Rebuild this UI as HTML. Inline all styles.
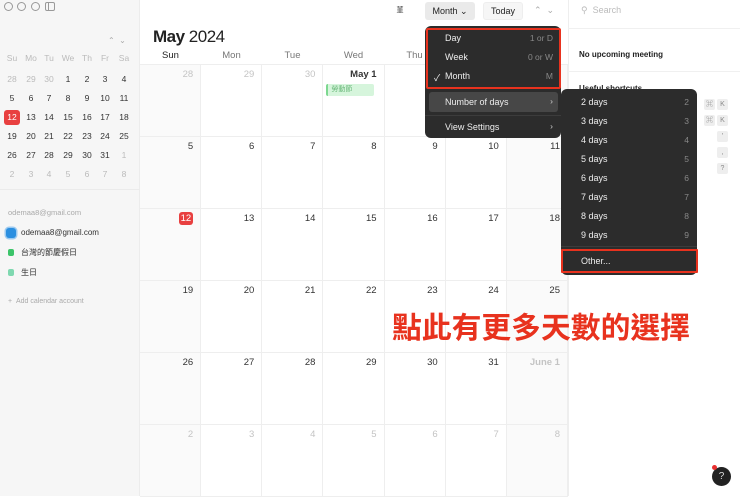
<!DOCTYPE html>
<html><head><meta charset="utf-8">
<style>
*{margin:0;padding:0;box-sizing:border-box}
body{width:740px;height:496px;overflow:hidden;background:#fff;font-family:"Liberation Sans","Noto Sans CJK TC",sans-serif;position:relative;color:#222}
.a{position:absolute}
#side{left:0;top:0;width:140px;height:496px;background:#f6f6f6;border-right:1px solid #ececec}
.mc{position:absolute;width:18px;text-align:center;font-size:8.5px;color:#333}
.g{color:#bbb}
#grid{left:140px;top:65px;width:428px;height:432px;display:grid;grid-template-columns:repeat(7,1fr);grid-template-rows:repeat(6,72px)}
#grid div{border-right:1px solid #eee;border-bottom:1px solid #eee;text-align:right;padding:4px 7px 0 0;font-size:9.5px;color:#333;position:relative}
#grid div.s{background:#fafafa}
#grid div.gr{color:#c4c4c4}
.dh{position:absolute;top:50px;font-size:9.5px;color:#777;width:61px;text-align:center}
.menu{background:#2c2c2c;border-radius:6px;color:#eee;font-size:9px}
.it{position:absolute;left:20px}
.sc{position:absolute;right:8px;color:#888;font-size:8.5px}
.red{border:2.5px solid #e8321e}
.key{position:absolute;width:11px;height:11px;background:#eee;border-radius:2px;font-size:7px;color:#888;text-align:center;line-height:11px}
</style></head><body>
<div id="side" class="a">
 <div class="a" style="left:4px;top:2px;width:9px;height:9px;border:1px solid #999;border-radius:50%"></div>
 <div class="a" style="left:17px;top:2px;width:9px;height:9px;border:1px solid #999;border-radius:50%"></div>
 <div class="a" style="left:31px;top:2px;width:9px;height:9px;border:1px solid #999;border-radius:50%"></div>
 <div class="a" style="left:45px;top:2px;width:10px;height:9px;border:1px solid #999;border-radius:2px"></div>
 <div class="a" style="left:48px;top:2px;width:1px;height:9px;background:#999"></div>
 <div class="a" style="left:108px;top:36px;font-size:8px;color:#aaa">⌃ &nbsp;⌄</div>
 <div class="mc g" style="left:3px;top:53px">Su</div><div class="mc g" style="left:22px;top:53px">Mo</div><div class="mc g" style="left:40px;top:53px">Tu</div><div class="mc g" style="left:59px;top:53px">We</div><div class="mc g" style="left:78px;top:53px">Th</div><div class="mc g" style="left:96px;top:53px">Fr</div><div class="mc g" style="left:115px;top:53px">Sa</div>
 <div class="mc g" style="left:3px;top:74px">28</div><div class="mc g" style="left:22px;top:74px">29</div><div class="mc g" style="left:40px;top:74px">30</div><div class="mc" style="left:59px;top:74px">1</div><div class="mc" style="left:78px;top:74px">2</div><div class="mc" style="left:96px;top:74px">3</div><div class="mc" style="left:115px;top:74px">4</div>
 <div class="mc" style="left:3px;top:93px">5</div><div class="mc" style="left:22px;top:93px">6</div><div class="mc" style="left:40px;top:93px">7</div><div class="mc" style="left:59px;top:93px">8</div><div class="mc" style="left:78px;top:93px">9</div><div class="mc" style="left:96px;top:93px">10</div><div class="mc" style="left:115px;top:93px">11</div>
 <div class="a" style="left:4px;top:110px;width:16px;height:15px;background:#e84040;border-radius:3px"></div>
 <div class="mc" style="left:3px;top:112px;color:#fff">12</div><div class="mc" style="left:22px;top:112px">13</div><div class="mc" style="left:40px;top:112px">14</div><div class="mc" style="left:59px;top:112px">15</div><div class="mc" style="left:78px;top:112px">16</div><div class="mc" style="left:96px;top:112px">17</div><div class="mc" style="left:115px;top:112px">18</div>
 <div class="mc" style="left:3px;top:131px">19</div><div class="mc" style="left:22px;top:131px">20</div><div class="mc" style="left:40px;top:131px">21</div><div class="mc" style="left:59px;top:131px">22</div><div class="mc" style="left:78px;top:131px">23</div><div class="mc" style="left:96px;top:131px">24</div><div class="mc" style="left:115px;top:131px">25</div>
 <div class="mc" style="left:3px;top:150px">26</div><div class="mc" style="left:22px;top:150px">27</div><div class="mc" style="left:40px;top:150px">28</div><div class="mc" style="left:59px;top:150px">29</div><div class="mc" style="left:78px;top:150px">30</div><div class="mc" style="left:96px;top:150px">31</div><div class="mc g" style="left:115px;top:150px">1</div>
 <div class="mc g" style="left:3px;top:169px">2</div><div class="mc g" style="left:22px;top:169px">3</div><div class="mc g" style="left:40px;top:169px">4</div><div class="mc g" style="left:59px;top:169px">5</div><div class="mc g" style="left:78px;top:169px">6</div><div class="mc g" style="left:96px;top:169px">7</div><div class="mc g" style="left:115px;top:169px">8</div>
 <div class="a" style="left:0;top:189px;width:140px;height:1px;background:#ebebeb"></div>
 <div class="a" style="left:8px;top:208px;font-size:7.5px;color:#aaa">odemaa8@gmail.com</div>
 <div class="a" style="left:6px;top:228px;width:10px;height:10px;border-radius:3px;background:#2b8fe0;box-shadow:0 0 0 1.5px #9ccaf0"></div>
 <div class="a" style="left:21px;top:228px;font-size:8px;color:#333">odemaa8@gmail.com</div>
 <div class="a" style="left:8px;top:249px;width:6px;height:7px;border-radius:2px;background:#3cc46a"></div>
 <div class="a" style="left:21px;top:247px;font-size:8px;color:#333">台灣的節慶假日</div>
 <div class="a" style="left:8px;top:269px;width:6px;height:7px;border-radius:2px;background:#7fd8b0"></div>
 <div class="a" style="left:21px;top:267px;font-size:8px;color:#333">生日</div>
 <div class="a" style="left:8px;top:298px;font-size:7px;color:#aaa">+ &nbsp;Add calendar account</div>
</div>

<div class="a" style="left:153px;top:27px;font-size:17px;letter-spacing:-0.5px"><b>May</b> 2024</div>
<div class="dh" style="left:140px;color:#222">Sun</div><div class="dh" style="left:201px">Mon</div><div class="dh" style="left:262px">Tue</div><div class="dh" style="left:323px">Wed</div><div class="dh" style="left:384px">Thu</div><div class="dh" style="left:445px">Fri</div><div class="dh" style="left:506px">Sat</div>
<div class="a" style="left:140px;top:64px;width:428px;height:1px;background:#eee"></div>

<div id="grid" class="a">
 <div class="s gr">28</div><div class="gr">29</div><div class="gr">30</div><div><b>May 1</b><span class="a" style="left:3px;top:19px;width:48px;height:12px;background:#d6f5dc;border-left:2px solid #7dd890;border-radius:2px;font-size:7px;color:#6ab87a;text-align:left;padding-left:3px;line-height:12px">勞動節</span></div><div>2</div><div>3</div><div class="s">4</div>
 <div class="s">5</div><div>6</div><div>7</div><div>8</div><div>9</div><div>10</div><div class="s">11</div>
 <div class="s"><span style="background:#e84040;color:#fff;border-radius:3px;padding:1px 2px">12</span></div><div>13</div><div>14</div><div>15</div><div>16</div><div>17</div><div class="s">18</div>
 <div class="s">19</div><div>20</div><div>21</div><div>22</div><div>23</div><div>24</div><div class="s">25</div>
 <div class="s">26</div><div>27</div><div>28</div><div>29</div><div>30</div><div>31</div><div class="s gr"><b>June 1</b></div>
 <div class="s gr">2</div><div class="gr">3</div><div class="gr">4</div><div class="gr">5</div><div class="gr">6</div><div class="gr">7</div><div class="s gr">8</div>
</div>

<div class="a" style="left:393px;top:5px;width:14px;height:12px;font-size:7px;text-align:center;color:#444">菫</div>
<div class="a" style="left:425px;top:2px;width:50px;height:18px;background:#eaeaea;border-radius:3px;font-size:9px;line-height:18px;text-align:center">Month ⌄</div>
<div class="a" style="left:483px;top:2px;width:40px;height:18px;background:#f6f6f6;border:1px solid #eee;border-radius:3px;font-size:9px;line-height:16px;text-align:center">Today</div>
<div class="a" style="left:534px;top:5px;font-size:9px;color:#aaa">⌃ &nbsp;⌄</div>

<div class="a" style="left:568px;top:0;width:1px;height:496px;background:#eee"></div>
<div class="a" style="left:581px;top:5px;font-size:9px;color:#bbb">&#9906;&nbsp; Search</div>
<div class="a" style="left:568px;top:28px;width:172px;height:1px;background:#f0f0f0"></div>
<div class="a" style="left:579px;top:50px;font-size:8px;font-weight:bold;color:#222">No upcoming meeting</div>
<div class="a" style="left:568px;top:71px;width:172px;height:1px;background:#f0f0f0"></div>
<div class="a" style="left:579px;top:84px;font-size:8px;font-weight:bold;color:#222">Useful shortcuts</div>
<div class="key" style="left:704px;top:99px">⌘</div><div class="key" style="left:717px;top:99px">K</div>
<div class="key" style="left:704px;top:115px">⌘</div><div class="key" style="left:717px;top:115px">K</div>
<div class="key" style="left:717px;top:131px">'</div>
<div class="key" style="left:717px;top:147px">,</div>
<div class="key" style="left:717px;top:163px">?</div>

<div class="a menu" style="left:425px;top:26px;width:136px;height:112px">
 <div class="a red" style="left:1px;top:2px;width:135px;height:61px;border-radius:2px"></div>
 <div class="it" style="top:7px">Day</div><div class="sc" style="top:7px">1 or D</div>
 <div class="it" style="top:26px">Week</div><div class="sc" style="top:26px">0 or W</div>
 <div class="a" style="left:9px;top:45px">✓</div><div class="it" style="top:45px">Month</div><div class="sc" style="top:45px">M</div>
 <div class="a" style="left:4px;top:66px;width:129px;height:20px;background:#474747;border-radius:3px"></div>
 <div class="it" style="top:71px">Number of days</div><div class="sc" style="top:70px;color:#ccc">›</div>
 <div class="a" style="left:0;top:89px;width:136px;height:1px;background:#3c3c3c"></div>
 <div class="it" style="top:96px">View Settings</div><div class="sc" style="top:95px;color:#ccc">›</div>
</div>

<div class="a menu" style="left:561px;top:89px;width:136px;height:186px">
 <div class="it" style="top:8px">2 days</div><div class="sc" style="top:8px">2</div>
 <div class="it" style="top:27px">3 days</div><div class="sc" style="top:27px">3</div>
 <div class="it" style="top:46px">4 days</div><div class="sc" style="top:46px">4</div>
 <div class="it" style="top:65px">5 days</div><div class="sc" style="top:65px">5</div>
 <div class="it" style="top:84px">6 days</div><div class="sc" style="top:84px">6</div>
 <div class="it" style="top:103px">7 days</div><div class="sc" style="top:103px">7</div>
 <div class="it" style="top:122px">8 days</div><div class="sc" style="top:122px">8</div>
 <div class="it" style="top:141px">9 days</div><div class="sc" style="top:141px">9</div>
 <div class="a" style="left:0;top:157px;width:136px;height:1px;background:#3c3c3c"></div>
 <div class="a red" style="left:0;top:160px;width:137px;height:24px;border-radius:1px"></div>
 <div class="it" style="top:167px">Other...</div>
</div>

<div class="a" style="left:392px;top:303px;font-size:29.8px;font-weight:bold;color:#e8321e;white-space:nowrap;font-family:'Noto Sans CJK TC',sans-serif">點此有更多天數的選擇</div>

<div class="a" style="left:712px;top:467px;width:19px;height:19px;border-radius:50%;background:#222;color:#ddd;font-size:10px;text-align:center;line-height:19px">?</div>
<div class="a" style="left:712px;top:465px;width:5px;height:5px;border-radius:50%;background:#e83030"></div>
</body></html>
